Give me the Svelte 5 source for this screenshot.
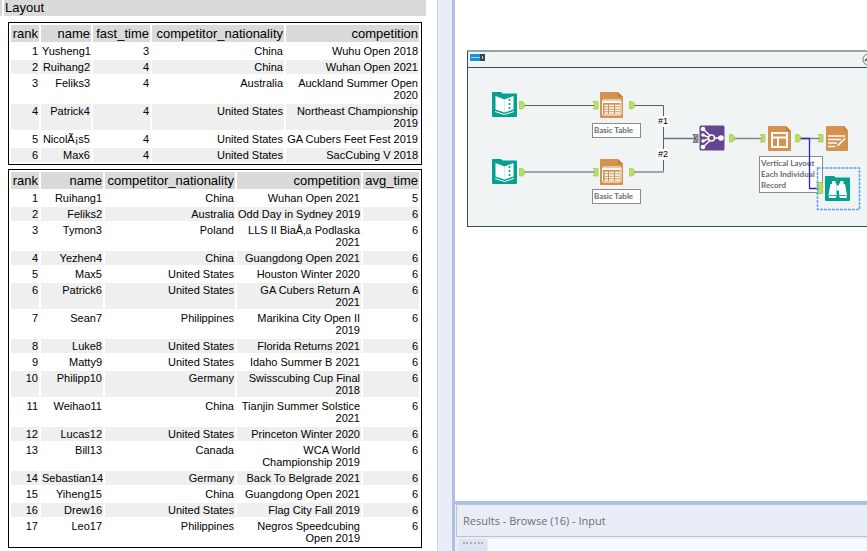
<script lang="ts">
  interface Column {
    key: string
    width: number
  }

  interface Report {
    id: string
    columns: Column[]
    rows: (string | number)[][]
  }

  interface Tool {
    id: string
    kind: 'input' | 'table' | 'join' | 'layout' | 'render' | 'browse'
    x: number
    y: number
  }

  const reports: Report[] = [
    {
      id: 'fastest',
      columns: [
        { key: 'rank', width: 28 },
        { key: 'name', width: 50 },
        { key: 'fast_time', width: 57 },
        { key: 'competitor_nationality', width: 132 },
        { key: 'competition', width: 133 },
      ],
      rows: [
        [1, 'Yusheng1', 3, 'China', 'Wuhu Open 2018'],
        [2, 'Ruihang2', 4, 'China', 'Wuhan Open 2021'],
        [3, 'Feliks3', 4, 'Australia', 'Auckland Summer Open\n2020'],
        [4, 'Patrick4', 4, 'United States', 'Northeast Championship\n2019'],
        [5, 'NicolÃ¡s5', 4, 'United States', 'GA Cubers Feet Fest 2019'],
        [6, 'Max6', 4, 'United States', 'SacCubing V 2018'],
      ],
    },
    {
      id: 'average',
      columns: [
        { key: 'rank', width: 28 },
        { key: 'name', width: 62 },
        { key: 'competitor_nationality', width: 130 },
        { key: 'competition', width: 124 },
        { key: 'avg_time', width: 56 },
      ],
      rows: [
        [1, 'Ruihang1', 'China', 'Wuhan Open 2021', 5],
        [2, 'Feliks2', 'Australia', 'Odd Day in Sydney 2019', 6],
        [3, 'Tymon3', 'Poland', 'LLS II BiaÅ‚a Podlaska\n2021', 6],
        [4, 'Yezhen4', 'China', 'Guangdong Open 2021', 6],
        [5, 'Max5', 'United States', 'Houston Winter 2020', 6],
        [6, 'Patrick6', 'United States', 'GA Cubers Return A\n2021', 6],
        [7, 'Sean7', 'Philippines', 'Marikina City Open II\n2019', 6],
        [8, 'Luke8', 'United States', 'Florida Returns 2021', 6],
        [9, 'Matty9', 'United States', 'Idaho Summer B 2021', 6],
        [10, 'Philipp10', 'Germany', 'Swisscubing Cup Final\n2018', 6],
        [11, 'Weihao11', 'China', 'Tianjin Summer Solstice\n2021', 6],
        [12, 'Lucas12', 'United States', 'Princeton Winter 2020', 6],
        [13, 'Bill13', 'Canada', 'WCA World\nChampionship 2019', 6],
        [14, 'Sebastian14', 'Germany', 'Back To Belgrade 2021', 6],
        [15, 'Yiheng15', 'China', 'Guangdong Open 2021', 6],
        [16, 'Drew16', 'United States', 'Flag City Fall 2019', 6],
        [17, 'Leo17', 'Philippines', 'Negros Speedcubing\nOpen 2019', 6],
      ],
    },
  ]

  const tools: Tool[] = [
    { id: 'input-1', kind: 'input', x: 37, y: 92 },
    { id: 'input-2', kind: 'input', x: 37, y: 159 },
    { id: 'table-1', kind: 'table', x: 145, y: 92 },
    { id: 'table-2', kind: 'table', x: 145, y: 159 },
    { id: 'join', kind: 'join', x: 244, y: 125 },
    { id: 'layout', kind: 'layout', x: 312, y: 125 },
    { id: 'render', kind: 'render', x: 369, y: 125 },
    { id: 'browse', kind: 'browse', x: 370, y: 176 },
  ]

  const notes = [
    { id: 'note-1', text: 'Basic Table', x: 137, y: 123, width: 49 },
    { id: 'note-2', text: 'Basic Table', x: 137, y: 189, width: 49 },
    { id: 'note-3', text: 'Vertical Layout\nEach Individual\nRecord', x: 304, y: 156, width: 64 },
  ]

  const wireLabels = [
    { text: '#1', x: 202, y: 116 },
    { text: '#2', x: 202, y: 149 },
  ]

  const outputs = [
    [64, 101],
    [64, 168],
    [174, 101],
    [174, 168],
    [274, 134],
    [340, 134],
  ]

  const inputs = [
    [138, 101],
    [138, 168],
    [305, 134],
    [363, 134],
  ]
</script>

<div class="app">
  <section class="report">
    <header class="report-head"><h1>Layout</h1></header>
    <div class="tables">
      {#each reports as report (report.id)}
        <table>
          <colgroup>
            {#each report.columns as column (column.key)}
              <col style="width: {column.width}px" />
            {/each}
          </colgroup>
          <thead>
            <tr>
              {#each report.columns as column (column.key)}
                <th scope="col">{column.key}</th>
              {/each}
            </tr>
          </thead>
          <tbody>
            {#each report.rows as row (row[0])}
              <tr>
                {#each row as value}
                  <td>{value}</td>
                {/each}
              </tr>
            {/each}
          </tbody>
        </table>
      {/each}
    </div>
  </section>

  <div class="splitter"></div>

  <main class="workspace">
    <section class="canvas">
      <div class="container">
        <div class="container-head">
          <svg width="15" height="7" viewBox="0 0 15 7" aria-hidden="true">
            <rect width="11" height="7" fill="#1793cf" />
            <path d="M1 3.5h9" stroke="#9bd4ef" />
            <rect x="10" width="5" height="7" fill="#3b4650" />
            <path d="M12.5 2v3" stroke="#c3cbd1" />
          </svg>
        </div>
        <button type="button" class="collapse" aria-label="Collapse container">
          <svg width="13" height="13" viewBox="0 0 13 13">
            <circle cx="6.5" cy="6.5" r="5.5" fill="#f6f8f9" stroke="#6a7075" />
            <path d="M3 8l3.5-3.5L10 8" fill="none" stroke="#444" stroke-width="1.5" />
          </svg>
        </button>
      </div>

      {#each notes as note (note.id)}
        <div class="note" style="left: {note.x}px; top: {note.y}px; width: {note.width}px">{note.text}</div>
      {/each}

      <svg class="wires" width="412" height="227" viewBox="0 0 412 227" aria-hidden="true">
        <g fill="none">
          <path d="M69 105.5H140M178 105.5H208.5V172" stroke="#5c5f61" />
          <path d="M69 172H140M178 172H209" stroke="#a3a6a8" stroke-width="2" />
          <path d="M208 138.5H240" stroke="#6f7274" stroke-width="1.5" />
          <path d="M279 138.5H307M345 138.5H365" stroke="#828587" stroke-width="1.5" />
          <path d="M345 138.5H354.5V188.5H363" stroke="#2424d8" stroke-width="1.3" />
        </g>
        {#each outputs as [x, y]}
          <path
            d="M{x + 0.5} {y + 0.5}h3l2 2v3.5l-2 2h-3z"
            fill="#b9df63"
            stroke="#9cc84c"
            stroke-width="0.7"
          />
        {/each}
        {#each inputs as [x, y]}
          <path
            d="M{x} {y + 0.5}h5v7.5h-5l1.5-2v-3.5z"
            fill="#b9df63"
            stroke="#9cc84c"
            stroke-width="0.7"
          />
        {/each}
        <path d="M361.5 182.5h6v11h-6l2-3v-5z" fill="#b9df63" stroke="#9cc84c" />
        <path d="M238 134.5h5v8h-5l1.5-2.5v-3z" fill="#aaa" stroke="#777" />
        <path d="M239 135.5l3 6M242 135.5l-3 6" stroke="#555" stroke-width="0.7" />
        <rect
          x="362.5"
          y="168"
          width="42"
          height="41.5"
          fill="none"
          stroke="#5ba4f0"
          stroke-width="1.5"
          stroke-dasharray="3 1"
        />
      </svg>

      {#each tools as tool (tool.id)}
        <svg
          class="tool"
          style="left: {tool.x}px; top: {tool.y}px"
          width="26"
          height="26"
          viewBox="0 0 26 26"
          role="img"
          aria-label={tool.kind}
        >
          {#if tool.kind === 'input'}
            <path d="M1 0h8l1.5 1.5H24a1 1 0 0 1 1 1V24a1 1 0 0 1-1 1H1a1 1 0 0 1-1-1V1a1 1 0 0 1 1-1z" fill="#05a08e" />
            <path d="M3.5 4l9 3.5v13l-9-3zM21.500 4l-9 3.500v13l9-3z" fill="#fff" />
            <path d="M3 19.5l9.5 3 9.500-3" fill="none" stroke="#fff" />
            <path d="M12.5 7.5v12.500" stroke="#b5e0da" stroke-width="0.6" />
            <path d="M17.5 7v11" stroke="#05a08e" stroke-width="1.6" stroke-dasharray="2 2" />
          {:else if tool.kind === 'table'}
            <path d="M1.500 0H18l5 5v20a1 1 0 0 1-1 1H1a1 1 0 0 1-1-1V1a1 1 0 0 1 1-1z" fill="#d4924e" />
            <path d="M18 0v5h5z" fill="#c17f3c" />
            <rect x="2.5" y="8" width="18.500" height="15" rx="1" fill="#d4924e" stroke="#fff" />
            <path d="M3 10h17.500" stroke="#fff" stroke-width="2" />
            <path d="M4.5 13.5h3.500M9 13.5h5M15 13.5h5M4.5 16h3.500M9 16h5M15 16h5M4.5 18.5h3.500M9 18.5h5M15 18.5h5M4.5 21h3.500M9 21h5M15 21h5" stroke="#fff" stroke-width="1.6" />
          {:else if tool.kind === 'join'}
            <rect x="0.5" y="0.5" width="25" height="25" rx="1.5" fill="#64458f" />
            <g stroke="#fff" stroke-width="1.5" fill="none">
              <path d="M4 4l6.5 6M4 10l5 2M4 16l5-2M4 22l6.5-6M15 13h7" />
              <circle cx="12.5" cy="13" r="3" />
            </g>
            <g fill="#fff">
              <circle cx="4" cy="4" r="2.3" />
              <circle cx="4" cy="10" r="1.8" />
              <circle cx="4" cy="16" r="1.8" />
              <circle cx="4" cy="22" r="2.3" />
              <circle cx="22" cy="13" r="2.8" />
            </g>
          {:else if tool.kind === 'layout'}
            <path d="M2 1h17l5 5v19a1 1 0 0 1-1 1H2a1 1 0 0 1-1-1V2a1 1 0 0 1 1-1z" fill="#d4924e" />
            <path d="M19 1v5h5z" fill="#c17f3c" />
            <rect x="4" y="7" width="17" height="16" fill="#fff" />
            <path d="M6 9h13v2.500H6zM6 13.500h4v7.500H6zM12 13.500h7v7.500h-7z" fill="#d4924e" />
          {:else if tool.kind === 'render'}
            <path d="M3 1h17l4 5v19a1 1 0 0 1-1 1H3a1 1 0 0 1-1-1V2a1 1 0 0 1 1-1z" fill="#d4924e" />
            <path d="M20 1v5h4z" fill="#c17f3c" />
            <path d="M4 11h17M4 14.5h13M4 18h9M4 21.5h7" stroke="#fff" stroke-width="1.5" />
            <path d="M20.5 12.5l1.500 1.200-7 7-3 1.500 1.500-3z" fill="#fff" stroke="#d4924e" stroke-width="0.6" />
          {:else}
            <path d="M1 0h8l1.5 1.5H24a1 1 0 0 1 1 1V24a1 1 0 0 1-1 1H1a1 1 0 0 1-1-1V1a1 1 0 0 1 1-1z" fill="#05a08e" />
            <path d="M7 5h3.5v2.5h1V20l-1 2H4l-.5-3L5.5 8H7zM18.5 5H15v2.5h-1V20l1 2h6.5l.5-3-2-11h-1.5z" fill="#fff" />
            <path d="M11.5 9.5h2.5v5h-2.5z" fill="#fff" />
            <path d="M4 19.5h7.5M14 19.5h7.5" stroke="#05a08e" stroke-width="0.9" />
          {/if}
        </svg>
      {/each}

      {#each wireLabels as label (label.text)}
        <span class="wire-label" style="left: {label.x}px; top: {label.y}px">{label.text}</span>
      {/each}
    </section>

    <section class="results">
      <h2>Results - Browse (16) - Input</h2>
      <div class="dock">
        <div class="grip"></div>
        <div class="dock-body"></div>
      </div>
    </section>
  </main>
</div>

<style>
  :global(body) {
    background: #fff;
  }

  .app {
    color: #000;
    display: flex;
    font-family: 'Liberation Sans', Arial, sans-serif;
    min-height: 100vh;
  }

  .report {
    flex: none;
    padding-right: 11px;
  }

  .report-head {
    background: #dadada;
    border-left: 2px solid #dadada;
    height: 16px;
  }

  h1 {
    border-left: 2px solid #fff;
    font-size: 13px;
    font-weight: 400;
    line-height: 16px;
    margin: 0;
    padding-left: 1px;
  }

  .tables {
    display: flex;
    flex-direction: column;
    gap: 4px;
    padding: 6px 4px 2px 8px;
  }

  table {
    border: 1px solid #000;
    border-collapse: separate;
    border-spacing: 2px;
    table-layout: fixed;
    width: 414px;
  }

  th,
  td {
    padding: 1px;
    text-align: right;
    vertical-align: top;
    white-space: pre;
  }

  th {
    background: #dadada;
    font-size: 13px;
    font-weight: 400;
    line-height: 15px;
  }

  td {
    font-size: 11px;
    line-height: 12px;
  }

  tbody tr:nth-child(even) td {
    background: #efefef;
  }

  .splitter {
    background: #e9edf8;
    border-left: 1px solid #d6d6d6;
    border-right: 3px solid #afbfe1;
    flex: none;
    width: 14px;
  }

  .workspace {
    display: flex;
    flex: 1;
    flex-direction: column;
    min-width: 0;
  }

  .canvas {
    flex: 1;
    overflow: hidden;
    position: relative;
  }

  .container {
    background: #f0f4f5;
    border: 1px solid #34504f;
    border-right: 0;
    border-top: 2px solid #94a5a3;
    height: 174px;
    left: 12px;
    position: absolute;
    right: 0;
    top: 50px;
  }

  .container-head {
    border-bottom: 1px solid #34504f;
    height: 15px;
  }

  .container-head svg {
    display: block;
    margin-left: 2px;
    padding-top: 2px;
  }

  .collapse {
    background: none;
    border: 0;
    cursor: pointer;
    height: 13px;
    padding: 0;
    position: absolute;
    right: -8px;
    top: 1px;
    width: 13px;
  }

  .collapse svg {
    display: block;
  }

  .note {
    background: #fff;
    border: 1px solid #8a8d8f;
    box-sizing: border-box;
    color: #6b6d70;
    font-family: Lato, 'Open Sans', sans-serif;
    font-size: 8px;
    font-weight: 700;
    line-height: 11px;
    padding: 1px;
    position: absolute;
    white-space: pre;
  }

  .wires {
    left: 0;
    position: absolute;
    top: 0;
  }

  .tool {
    position: absolute;
  }

  .wire-label {
    background: #fff;
    font-size: 9px;
    line-height: 11px;
    padding: 0 1px;
    position: absolute;
  }

  .results {
    background: #e9edf8;
    border-top: 3px solid #afbfe1;
  }

  h2 {
    border: 1px solid #c3c3c3;
    border-right: 0;
    color: #6d6d6d;
    font-family: 'Open Sans', 'Noto Sans', sans-serif;
    font-size: 11px;
    font-weight: 400;
    line-height: 31px;
    margin: 0 0 0 1px;
    padding-left: 6px;
  }

  .dock {
    display: flex;
    gap: 1px;
    height: 12px;
    margin: 2px 0 0 4px;
  }

  .grip {
    background: #dde3f0;
    border-radius: 3px 3px 0 0;
    width: 28px;
  }

  .grip::before {
    border-top: 2px dotted #a9b0bd;
    content: '';
    display: block;
    margin: 3px 4px 0;
  }

  .dock-body {
    background: #f7faff;
    flex: 1;
  }
</style>
